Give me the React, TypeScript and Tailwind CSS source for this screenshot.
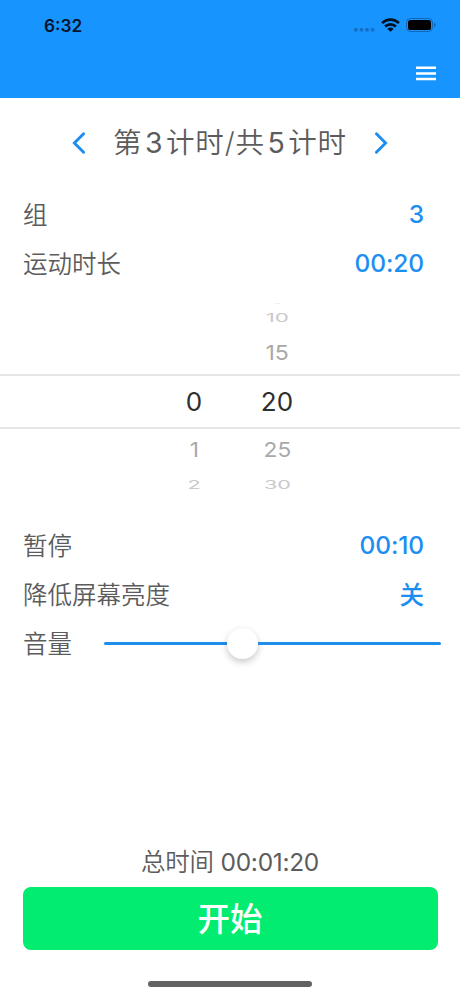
import React from "react";
import clsx from "clsx";

const values = {
  group: "3",
  duration: "00:20",
  pause: "00:10",
  dim: "关",
};

function StatusBar() {
  return (
    <div className="flex h-[50px] items-center justify-between pr-[24px] pl-[44px]">
      <span className="pt-[2px] text-[17.3px] leading-[52px] font-semibold text-[#06142b]">6:32</span>
      <div className="flex items-center">
        <svg className="mt-[10px] h-[4px] w-[21px]" viewBox="0 0 21 4" fill="#136fc2">
          <rect x="0" y="0" width="3.6" height="3.6" rx="1" />
          <rect x="5.6" y="0" width="3.6" height="3.6" rx="1" />
          <rect x="11.2" y="0" width="3.6" height="3.6" rx="1" />
          <rect x="16.8" y="0" width="3.6" height="3.6" rx="1" />
        </svg>
        <svg className="ml-[6px] h-[14px] w-[19px]" viewBox="0 0 19 14" fill="none" stroke="#03101f" strokeWidth="2.7">
          <path d="M1.1 5.1a12 12 0 0 1 16.8 0" />
          <path d="M4.1 8.5a7.7 7.7 0 0 1 10.8 0" />
          <path d="M9.5 13.8 6.4 10.9a4.4 4.4 0 0 1 6.2 0z" fill="#03101f" stroke="none" />
        </svg>
        <svg className="ml-[6px] h-[14px] w-[30px]" viewBox="0 0 30 14" fill="none">
          <rect x="0.5" y="0.5" width="26" height="13" rx="4" stroke="#1067b4" />
          <rect x="2" y="2" width="23" height="10" rx="2.6" fill="#000" />
          <path d="M28 4.8c2 .6 2 3.8 0 4.4z" fill="#1067b4" />
        </svg>
      </div>
    </div>
  );
}

function Row({ label, value }: { label: string; value: string }) {
  return (
    <div className="flex h-[49px] items-center justify-between pr-[36px] pl-[23px]">
      <span className="pt-[2px] text-[24.5px] font-[350] text-[#5c5c5c]">{label}</span>
      <span className={clsx("text-[24.5px] font-medium tracking-[-0.1px] text-[#1c8ef2]", value === "关" && "pt-[2px]")}>
        {value}
      </span>
    </div>
  );
}

function WheelColumn({ items, className }: { items: string[]; className?: string }) {
  return (
    <div className={clsx("flex flex-col items-center", className)}>
      <span className={clsx("h-[2px] w-[5px] border-t", items[0] ? "border-[#f0f0f0]" : "border-transparent")} />
      <span className="flex h-[26px] scale-x-[1.12] scale-y-[0.58] items-center text-[20px] text-[#c9c9c9]">{items[0]}</span>
      <span className="flex h-[44px] scale-x-[1.05] scale-y-[0.92] items-center text-[22px] text-[#a9a9a9]">{items[1]}</span>
      <span className="flex h-[53px] items-center text-[26px] text-[#2e2e2e]">{items[2]}</span>
      <span className="flex h-[44px] scale-x-[1.03] scale-y-[0.92] items-center text-[22px] text-[#a9a9a9]">{items[3]}</span>
      <span className="flex h-[26px] scale-x-[1.08] scale-y-[0.58] items-center text-[20px] text-[#c9c9c9]">{items[4]}</span>
    </div>
  );
}

function TimePicker() {
  return (
    <div className="grid h-[233px] grid-cols-1 grid-rows-1">
      <div className="col-start-1 row-start-1 mt-[86px] h-[55px] border-y-2 border-[#e6e6e6]" />
      <div className="col-start-1 row-start-1 flex pt-[15px] pl-[164px]">
        <WheelColumn items={["", "", "0", "1", "2"]} className="w-[60px]" />
        <WheelColumn items={["10", "15", "20", "25", "30"]} className="ml-[23px] w-[60px]" />
      </div>
    </div>
  );
}

function Chevron({ flip }: { flip?: boolean }) {
  return (
    <svg
      className={clsx("h-[24px] w-[14px]", flip && "-scale-x-100")}
      viewBox="0 0 14 24"
      fill="none"
      stroke="#1d8df0"
      strokeWidth="2.9"
      strokeLinecap="round"
      strokeLinejoin="miter"
    >
      <path d="M11.6 2.8 2.4 12l9.2 9.2" />
    </svg>
  );
}

export default function App() {
  return (
    <div className="flex h-[996px] w-[460px] flex-col overflow-hidden bg-white font-['Inter','Noto_Sans_CJK_SC',sans-serif]">
      <header className="h-[98px] bg-[#1894ff]">
        <StatusBar />
        <div className="flex justify-end pt-[16px] pr-[24px]">
          <svg className="h-[15px] w-[20px]" viewBox="0 0 20 15" fill="none" stroke="#fff" strokeWidth="2.5">
            <path d="M0 1.7h20M0 7.4h20M0 13h20" />
          </svg>
        </div>
      </header>

      <div className="flex h-[92px] items-start justify-between px-[72px] pt-[33px]">
        <Chevron />
        <div className="-mt-[10px] flex h-[44px] items-center text-[28.5px] font-[350] tracking-[0.9px] whitespace-nowrap text-[#5c5c5c]">
          <span>第</span>
          <span className="mx-[2.5px] font-normal">3</span>
          <span>计时/共</span>
          <span className="mx-[2.5px] font-normal">5</span>
          <span>计时</span>
        </div>
        <Chevron flip />
      </div>

      <Row label="组" value={values.group} />
      <Row label="运动时长" value={values.duration} />
      <TimePicker />
      <Row label="暂停" value={values.pause} />
      <Row label="降低屏幕亮度" value={values.dim} />

      <div className="flex h-[49px] items-center pr-[19px] pl-[23px]">
        <span className="w-[81px] pt-[2px] text-[24.5px] font-[350] text-[#5c5c5c]">音量</span>
        <div className="flex flex-1 items-center">
          <span className="h-[3.5px] w-[123px] rounded-l-full bg-[#1f8eea]" />
          <span className="h-[31px] w-[31px] rounded-full bg-white shadow-[0_3px_7px_rgba(0,0,0,0.22)]" />
          <span className="h-[3.5px] flex-1 rounded-r-full bg-[#1f8eea]" />
        </div>
      </div>

      <footer className="mt-auto flex flex-col items-center">
        <p className="h-[49px] text-[24.5px] leading-[49px] font-[350] tracking-[-0.2px] text-[#5c5c5c]">
          总时间 <span className="font-normal tracking-[-0.3px]">00:01:20</span>
        </p>
        <button className="h-[63px] w-[415px] rounded-[8px] bg-[#02ec70] pt-[1px] text-[32.5px] leading-[64px] font-medium text-white">
          开始
        </button>
        <div className="mt-[31px] mb-[9px] h-[6px] w-[164px] rounded-full bg-[#626262]" />
      </footer>
    </div>
  );
}
